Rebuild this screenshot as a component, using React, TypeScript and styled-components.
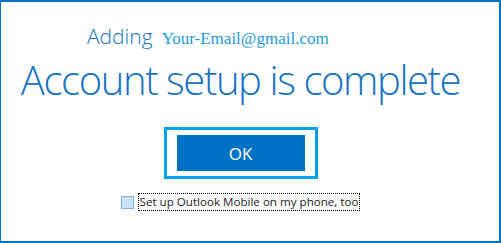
import React from 'react';
import styled, { createGlobalStyle } from 'styled-components';

const GlobalStyle = createGlobalStyle`
  html, body {
    margin: 0;
    padding: 0;
    background: #ffffff;
  }
  * {
    box-sizing: border-box;
  }
`;

const Frame = styled.div`
  width: 501px;
  height: 243px;
  background: #ffffff;
  border-style: solid;
  border-color: #0072c6;
  border-width: 2px 2px 2px 1px;
  display: flex;
  flex-direction: column;
  padding-right: 19px;
`;

const AddingRow = styled.div`
  display: flex;
  align-items: baseline;
  gap: 9px;
  margin-top: 20px;
  margin-left: 86px;
  height: 26px;
`;

const AddingLabel = styled.span`
  font-family: 'Open Sans', 'Noto Sans', sans-serif;
  font-weight: 300;
  font-size: 21px;
  color: #1672c4;
`;

const Email = styled.span`
  font-family: 'Liberation Serif', serif;
  font-size: 17px;
  color: #1d9bdc;
`;

const Title = styled.h1`
  margin: 10px 0 0 0;
  text-align: center;
  font-family: 'Open Sans', 'Noto Sans', sans-serif;
  font-weight: 300;
  font-size: 40px;
  letter-spacing: -1.4px;
  line-height: 44px;
  color: #1672c4;
  white-space: nowrap;
`;

const ButtonRow = styled.div`
  display: flex;
  justify-content: center;
  margin-top: 25px;
`;

const FocusRing = styled.div`
  border: 3px solid #00a2e8;
  padding: 5px 10px;
  background: #ffffff;
`;

const OkButton = styled.button`
  width: 128px;
  height: 36px;
  border: none;
  background: #0072c6;
  color: #ffffff;
  font-family: 'Open Sans', 'Noto Sans', sans-serif;
  font-size: 17px;
  cursor: pointer;
`;

const CheckRow = styled.label`
  display: flex;
  align-items: center;
  justify-content: center;
  gap: 4px;
  margin-top: 14px;
`;

const Box = styled.span`
  width: 13px;
  height: 13px;
  background: #cce4f7;
  border: 1px solid #7fb4e2;
`;

const CheckText = styled.span`
  font-family: 'Open Sans', 'Noto Sans', sans-serif;
  font-size: 11.6px;
  color: #222222;
  border: 1px dotted #000000;
  padding: 0 1px;
  line-height: 16px;
`;

export default function App() {
  return (
    <>
      <GlobalStyle />
      <Frame>
        <AddingRow>
          <AddingLabel>Adding</AddingLabel>
          <Email>Your-Email@gmail.com</Email>
        </AddingRow>
        <Title>Account setup is complete</Title>
        <ButtonRow>
          <FocusRing>
            <OkButton>OK</OkButton>
          </FocusRing>
        </ButtonRow>
        <CheckRow>
          <Box />
          <CheckText>Set up Outlook Mobile on my phone, too</CheckText>
        </CheckRow>
      </Frame>
    </>
  );
}
